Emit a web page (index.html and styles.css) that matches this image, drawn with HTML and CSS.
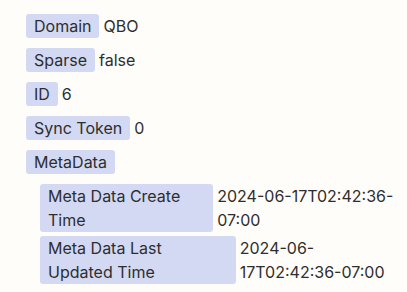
FILE: index.html
```html
<!DOCTYPE html>
<html>
<head>
<meta charset="utf-8">
<link rel="stylesheet" href="styles.css">
</head>
<body>
<div class="obj">
  <div class="row"><span class="key">Domain</span><span class="val">QBO</span></div>
  <div class="row"><span class="key">Sparse</span><span class="val">false</span></div>
  <div class="row"><span class="key">ID</span><span class="val">6</span></div>
  <div class="row"><span class="key">Sync Token</span><span class="val">0</span></div>
  <div class="row"><span class="key">MetaData</span></div>
  <div class="nested">
    <div class="row"><span class="key">Meta Data Create Time</span><span class="val">2024-06-17T02:42:36-07:00</span></div>
    <div class="row"><span class="key">Meta Data Last Updated Time</span><span class="val">2024-06-17T02:42:36-07:00</span></div>
  </div>
</div>
</body>
</html>
```
FILE: styles.css
```css
html, body {
  margin: 0;
  background: #fffdfa;
}
body {
  padding: 14px 0 8px 26px;
  overflow: hidden;
  font-family: Inter, "Noto Sans", sans-serif;
  font-size: 16px;
  line-height: 24px;
  color: #2e2e2e;
}
.obj {
  display: flex;
  flex-direction: column;
  gap: 10px;
  width: 389px;
}
.nested {
  display: flex;
  flex-direction: column;
  gap: 4px;
  padding-left: 14px;
}
.row {
  display: flex;
  align-items: flex-start;
  gap: 4px;
}
.key {
  background: #d3d9f3;
  border-radius: 3px;
  padding: 0 8px;
}
```
